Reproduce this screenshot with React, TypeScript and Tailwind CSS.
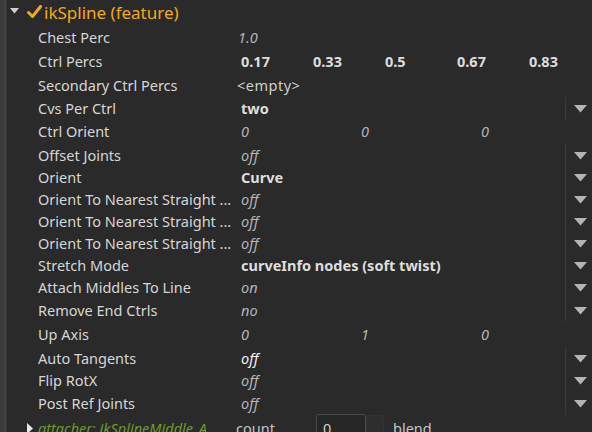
import React from "react";

type Row = {
  label: string;
  h: string;
  kind: "italic" | "bold" | "empty" | "multi-bold" | "multi-italic";
  values?: string[];
  dropdown?: boolean;
  bright?: boolean;
};

const rows: Row[] = [
  { label: "Chest Perc", h: "h-[24px]", kind: "italic", values: ["1.0"] },
  { label: "Ctrl Percs", h: "h-[24px]", kind: "multi-bold", values: ["0.17", "0.33", "0.5", "0.67", "0.83"] },
  { label: "Secondary Ctrl Percs", h: "h-[23px]", kind: "empty", values: ["<empty>"] },
  { label: "Cvs Per Ctrl", h: "h-[23px]", kind: "bold", values: ["two"], dropdown: true },
  { label: "Ctrl Orient", h: "h-[24px]", kind: "multi-italic", values: ["0", "0", "0"] },
  { label: "Offset Joints", h: "h-[23px]", kind: "italic", values: ["off"], dropdown: true },
  { label: "Orient", h: "h-[22px]", kind: "bold", values: ["Curve"], dropdown: true },
  { label: "Orient To Nearest Straight ...", h: "h-[22px]", kind: "italic", values: ["off"], dropdown: true },
  { label: "Orient To Nearest Straight ...", h: "h-[22px]", kind: "italic", values: ["off"], dropdown: true },
  { label: "Orient To Nearest Straight ...", h: "h-[22px]", kind: "italic", values: ["off"], dropdown: true },
  { label: "Stretch Mode", h: "h-[22px]", kind: "bold", values: ["curveInfo nodes (soft twist)"], dropdown: true },
  { label: "Attach Middles To Line", h: "h-[22px]", kind: "italic", values: ["on"], dropdown: true },
  { label: "Remove End Ctrls", h: "h-[23px]", kind: "italic", values: ["no"], dropdown: true },
  { label: "Up Axis", h: "h-[25px]", kind: "multi-italic", values: ["0", "1", "0"] },
  { label: "Auto Tangents", h: "h-[23px]", kind: "italic", values: ["off"], dropdown: true, bright: true },
  { label: "Flip RotX", h: "h-[22px]", kind: "italic", values: ["off"], dropdown: true },
  { label: "Post Ref Joints", h: "h-[23px]", kind: "italic", values: ["off"], dropdown: true },
];

function DownArrow() {
  return (
    <svg width="13" height="8" viewBox="0 0 13 8" className="shrink-0">
      <path d="M0 0 H13 L6.5 7.5 Z" fill="#b4b4b4" />
    </svg>
  );
}

function Value({ row }: { row: Row }) {
  const v = row.values ?? [];
  if (row.kind === "multi-bold") {
    return (
      <div className="flex">
        {v.map((x, i) => (
          <span key={i} className="w-[72px] font-bold text-[#dedede]">
            {x}
          </span>
        ))}
      </div>
    );
  }
  if (row.kind === "multi-italic") {
    return (
      <div className="flex">
        {v.map((x, i) => (
          <span key={i} className="w-[120px] italic text-[#b4b4b4]">
            {x}
          </span>
        ))}
      </div>
    );
  }
  if (row.kind === "bold") return <span className="font-bold text-[#dedede]">{v[0]}</span>;
  if (row.kind === "empty") return <span className="-ml-[4px] tracking-[0.5px] text-[#cfcfcf]">{v[0]}</span>;
  return (
    <span className={"italic " + (row.bright ? "text-[#f2f2f2]" : "text-[#b4b4b4]") + (v[0] === "1.0" ? " -ml-[3px]" : "")}>
      {v[0]}
    </span>
  );
}

export default function App() {
  return (
    <div
      className="w-[592px] h-[432px] overflow-hidden bg-[#2a2a2a] flex text-[14.5px] text-[#d6d6d6]"
      style={{ fontFamily: '"Noto Sans", "Open Sans", sans-serif' }}
    >
      {/* left strip */}
      <div className="w-[7px] shrink-0 flex">
        <div className="w-[4px] bg-[#3a3a3a]" />
        <div className="w-[2px] bg-[#444444]" />
        <div className="w-[1px] bg-[#323232]" />
      </div>

      <div className="flex-1 min-w-0 flex flex-col">
        {/* header */}
        <div className="h-[26px] shrink-0 flex items-center">
          <div className="w-[20px] shrink-0 flex justify-start pl-[3px] pb-[5px]">
            <svg width="9" height="6" viewBox="0 0 9 6">
              <path d="M0 0 H9 L4.5 5.5 Z" fill="#cfcfcf" />
            </svg>
          </div>
          <div className="w-[17px] shrink-0 flex justify-start pb-[2px]">
            <svg width="15" height="14" viewBox="0 0 15 14">
              <path d="M1.5 7.5 L5.5 11.5 L13.5 1.5" fill="none" stroke="#f2a81c" strokeWidth="3" strokeLinecap="round" strokeLinejoin="round" />
            </svg>
          </div>
          <span className="shrink-0 text-[17px] leading-none text-[#f2a81c] mb-[2px] whitespace-nowrap">ikSpline (feature)</span>
        </div>

        {rows.map((r, i) => (
          <div key={i} className={"flex items-stretch shrink-0 " + r.h}>
            <div className="w-[234px] pl-[31px] shrink-0 flex items-center whitespace-nowrap overflow-hidden">
              {r.label}
            </div>
            <div className="flex-1 min-w-0 flex items-center whitespace-nowrap">
              <Value row={r} />
            </div>
            <div className={"w-[27px] shrink-0 flex items-center justify-center pl-[2px] " + (r.dropdown ? "border-l border-[#383838]" : "border-l border-transparent")}>
              {r.dropdown && <DownArrow />}
            </div>
          </div>
        ))}

        {/* attacher row */}
        <div className="flex items-start pt-[3px] whitespace-nowrap">
          <svg width="6" height="11" viewBox="0 0 6 11" className="shrink-0 ml-[20px] mt-[5px]">
            <path d="M0 0 L6 5.5 L0 11 Z" fill="#e6e6e6" />
          </svg>
          <span className="shrink-0 ml-[5px] w-[198px] italic text-[#6f9a2c] overflow-hidden">attacher: ikSplineMiddle_A</span>
          <span className="shrink-0 w-[80px] text-[#c4c4c4]">count</span>
          <div className="shrink-0 w-[50px] h-[26px] mt-[-4px] rounded-[3px] border border-[#4a4a4a] bg-[#262626] pl-[6px] pt-[3px] text-[#cfcfcf]">
            0
          </div>
          <div className="shrink-0 w-[18px] h-[24px] mt-[-3px] rounded-r-[3px] border border-[#333333] bg-[#2e2e2e]" />
          <span className="shrink-0 ml-[9px] text-[#c4c4c4]">blend</span>
        </div>
      </div>
    </div>
  );
}
